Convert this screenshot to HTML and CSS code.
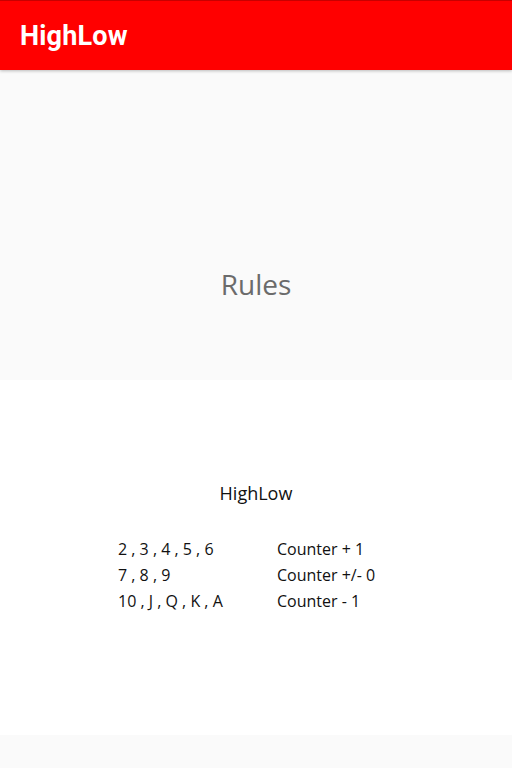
FILE: index.html
```html
<!DOCTYPE html>
<html>
<head>
<meta charset="utf-8">
<link rel="stylesheet" href="styles.css">
</head>
<body>
<header class="appbar"><span class="title">HighLow</span></header>
<section class="hero"><span class="hero-text">Rules</span></section>
<section class="card">
  <div class="card-title">HighLow</div>
  <div class="rules">
    <div class="cell">2 , 3 , 4 , 5 , 6</div><div class="cell">Counter + 1</div>
    <div class="cell">7 , 8 , 9</div><div class="cell">Counter +/- 0</div>
    <div class="cell">10 , J , Q , K , A</div><div class="cell">Counter - 1</div>
  </div>
</section>
<footer class="bottom"></footer>
</body>
</html>
```
FILE: styles.css
```css
html, body { margin: 0; padding: 0; }
body { width: 512px; height: 768px; background: #fafafa; overflow: hidden; }
.appbar {
  height: 70px; background: #ff0000; display: flex; align-items: center;
  padding-left: 20px; box-sizing: border-box;
  border-top: 1px solid #c80000;
  box-shadow: 0 1px 3px rgba(0,0,0,0.25);
  position: relative; z-index: 1;
}
.title { color: #fff; font-family: Roboto, "Liberation Sans", sans-serif; font-weight: 700; font-size: 27px; letter-spacing: 0.2px; }
.hero { height: 310px; background: #fafafa; display: flex; align-items: center; justify-content: center; }
.hero-text { font-family: "Open Sans", sans-serif; font-size: 28px; color: #6b6b6b; margin-top: 118px; }
.card { height: 355px; background: #fff; display: flex; flex-direction: column; align-items: center; box-sizing: border-box; padding-top: 101px; }
.card-title { font-family: "Open Sans", sans-serif; font-size: 18px; color: #111; }
.rules { display: grid; grid-template-columns: 159px 110px; margin-top: 31px; margin-left: -7px; }
.cell { font-family: "Open Sans", sans-serif; font-size: 16px; color: #111; line-height: 26px; }
.bottom { height: 33px; background: #fafafa; }
```
